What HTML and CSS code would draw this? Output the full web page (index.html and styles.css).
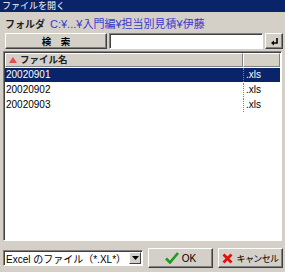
FILE: index.html
```html
<!DOCTYPE html>
<html lang="ja">
<head>
  <meta charset="UTF-8">
  <title>ファイルを開く</title>
  <link rel="stylesheet" href="styles.css">
</head>
<body>
  <div class="dialog">
    <div class="title">ファイルを開く</div>

    <div class="folder">
      <span class="folder-label">フォルダ</span>
      <span class="folder-path">C:¥...¥入門編¥担当別見積¥伊藤</span>
    </div>

    <div class="search">
      <button class="btn search-btn">検　索</button>
      <input class="search-input" type="text">
      <button class="btn enter-btn">
        <svg width="9" height="9" viewBox="0 0 9 9">
          <path d="M7 1 V6 H3" fill="none" stroke="#000" stroke-width="1.6"/>
          <path d="M1 6 L4 3.5 V8.5 Z" fill="#000"/>
        </svg>
      </button>
    </div>

    <div class="list">
      <div class="list-head">
        <div class="col-name">
          <svg class="sort" width="8" height="6" viewBox="0 0 8 6"><path d="M0 6 L4 0 L8 6 Z" fill="#e05050"/></svg>ファイル名
        </div>
        <div class="col-ext"></div>
      </div>
      <div class="row selected"><div class="col-name">20020901</div><div class="col-ext">.xls</div></div>
      <div class="row"><div class="col-name">20020902</div><div class="col-ext">.xls</div></div>
      <div class="row"><div class="col-name">20020903</div><div class="col-ext">.xls</div></div>
    </div>

    <div class="bottom">
      <div class="combo">
        <span class="combo-text">Excel のファイル（*.XL*）</span>
        <span class="combo-arrow">
          <svg width="7" height="4" viewBox="0 0 7 4"><path d="M0 0 H7 L3.5 4 Z" fill="#000"/></svg>
        </span>
      </div>
      <button class="btn act-btn">
        <svg width="14" height="12" viewBox="0 0 14 12">
          <path d="M1 6.5 L5 10.5 L13 1" fill="none" stroke="#1e9a1e" stroke-width="2.6"/>
        </svg>
        OK
      </button>
      <button class="btn act-btn">
        <svg width="11" height="11" viewBox="0 0 11 11">
          <path d="M1.5 1.5 L9.5 9.5 M9.5 1.5 L1.5 9.5" stroke="#e01010" stroke-width="2.8"/>
        </svg>
        <span class="narrow">キャンセル</span>
      </button>
    </div>
  </div>
</body>
</html>
```

FILE: styles.css
```css
* {
  margin: 0;
  padding: 0;
  box-sizing: border-box;
}
body {
  background: #d4d0c8;
  font-family: 'Liberation Sans', 'Noto Sans CJK JP', sans-serif;
  font-size: 10px;
  color: #000;
}
.dialog {
  width: 285px;
  height: 272px;
  display: flex;
  flex-direction: column;
}
.title {
  height: 12px;
  background: #0a246a;
  color: #fff;
  font-size: 9px;
  line-height: 12px;
  padding-left: 2px;
}
.folder {
  height: 20px;
  display: flex;
  align-items: center;
  padding: 2px 0 0 5px;
  gap: 5px;
}
.folder-label {
  font-weight: bold;
  font-size: 10px;
  color: #222;
}
.folder-path {
  color: #3838d0;
  font-size: 11px;
}
.btn {
  background: #d4d0c8;
  border: 1px solid;
  border-color: #fff #404040 #404040 #fff;
  box-shadow: inset -1px -1px 0 #808080;
  font-family: inherit;
  font-size: 10px;
  color: #000;
  display: flex;
  align-items: center;
  justify-content: center;
  white-space: nowrap;
}
.search {
  height: 16px;
  margin-top: 1px;
  display: flex;
  padding: 0 2px 0 5px;
  gap: 2px;
}
.search-btn {
  width: 102px;
  font-weight: bold;
  font-size: 9.5px;
}
.search-input {
  width: 154px;
  background: #fff;
  border: 1px solid;
  border-color: #808080 #fff #fff #808080;
  box-shadow: inset 1px 1px 0 #404040;
}
.enter-btn {
  width: 18px;
}
.list {
  margin: 2px 3px 0 3px;
  height: 190px;
  background: #fff;
  border: 1px solid;
  border-color: #808080 #fff #fff #808080;
  box-shadow: inset 1px 1px 0 #404040;
  padding: 1px 1px 0 1px;
}
.list-head {
  height: 14px;
  display: flex;
}
.list-head > div {
  background: #d4d0c8;
  border: 1px solid;
  border-color: #fff #808080 #808080 #fff;
  font-weight: bold;
  font-size: 9.5px;
  line-height: 12px;
  color: #222;
}
.sort {
  margin: 0 3px 0 2px;
  vertical-align: 0;
}
.col-name {
  width: 238px;
  padding-left: 1px;
}
.col-ext {
  flex: 1;
  padding-left: 2px;
}
.row {
  height: 14px;
  display: flex;
  line-height: 14px;
  margin-top: 1px;
}
.row .col-ext {
  border-left: 1px dotted #808080;
}
.selected {
  background: #0a246a;
  color: #fff;
}
.bottom {
  display: flex;
  align-items: center;
  padding: 7px 2px 0 3px;
  gap: 5px;
}
.combo {
  width: 140px;
  height: 16px;
  background: #fff;
  border: 1px solid;
  border-color: #808080 #fff #fff #808080;
  box-shadow: inset 1px 1px 0 #404040;
  display: flex;
  align-items: center;
  padding-left: 2px;
}
.combo-text {
  flex: 1;
}
.combo-arrow {
  width: 12px;
  height: 12px;
  margin-right: 1px;
  background: #d4d0c8;
  border: 1px solid;
  border-color: #fff #404040 #404040 #fff;
  display: flex;
  align-items: center;
  justify-content: center;
}
.act-btn {
  width: 65px;
  height: 20px;
  gap: 3px;
}
.narrow {
  font-size: 9px;
  letter-spacing: -0.6px;
}
```
